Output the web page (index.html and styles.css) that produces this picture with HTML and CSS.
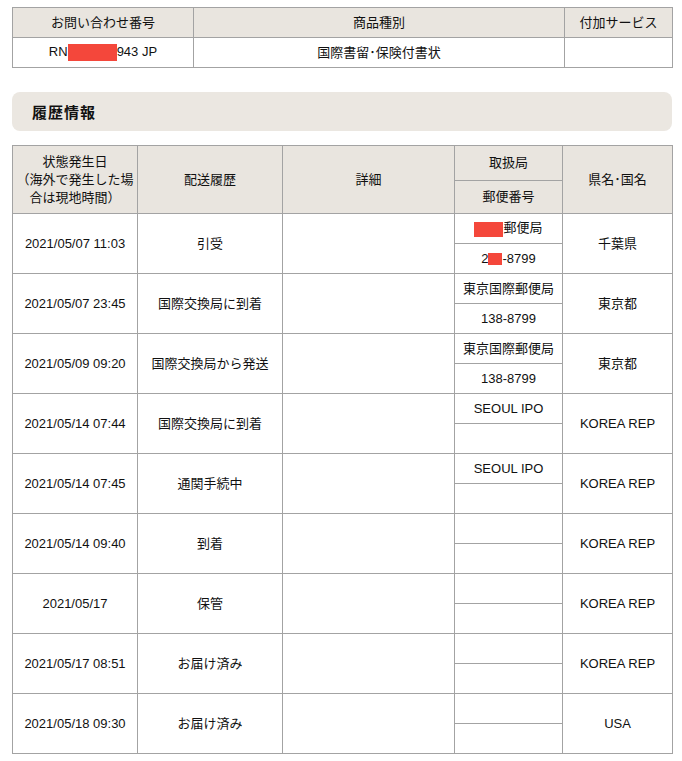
FILE: index.html
```html
<!DOCTYPE html>
<html lang="ja">
<head>
<meta charset="utf-8">
<title>追跡</title>
<link rel="stylesheet" href="styles.css">
</head>
<body>
<div class="page">
  <table class="summary">
    <colgroup><col class="c1"><col class="c2"><col class="c3"></colgroup>
    <tr class="h"><th>お問い合わせ番号</th><th>商品種別</th><th>付加サービス</th></tr>
    <tr class="r"><td>RN<span class="redact w49"></span>943 JP</td><td>国際書留･保険付書状</td><td></td></tr>
  </table>

  <div class="section">履歴情報</div>

  <table class="history">
    <colgroup><col class="d1"><col class="d2"><col class="d3"><col class="d4"><col class="d5"></colgroup>
    <tr class="h1">
      <th rowspan="2" class="multi">状態発生日<br>（海外で発生した場<br>合は現地時間）</th>
      <th rowspan="2">配送履歴</th>
      <th rowspan="2">詳細</th>
      <th>取扱局</th>
      <th rowspan="2">県名･国名</th>
    </tr>
    <tr class="h2"><th>郵便番号</th></tr>

    <tr class="s"><td rowspan="2">2021/05/07 11:03</td><td rowspan="2">引受</td><td rowspan="2"></td><td><span class="redact w29"></span>郵便局</td><td rowspan="2">千葉県</td></tr>
    <tr class="s"><td>2<span class="redact w14"></span>-8799</td></tr>

    <tr class="s"><td rowspan="2">2021/05/07 23:45</td><td rowspan="2">国際交換局に到着</td><td rowspan="2"></td><td>東京国際郵便局</td><td rowspan="2">東京都</td></tr>
    <tr class="s"><td>138-8799</td></tr>

    <tr class="s"><td rowspan="2">2021/05/09 09:20</td><td rowspan="2">国際交換局から発送</td><td rowspan="2"></td><td>東京国際郵便局</td><td rowspan="2">東京都</td></tr>
    <tr class="s"><td>138-8799</td></tr>

    <tr class="s"><td rowspan="2">2021/05/14 07:44</td><td rowspan="2">国際交換局に到着</td><td rowspan="2"></td><td>SEOUL IPO</td><td rowspan="2">KOREA REP</td></tr>
    <tr class="s"><td></td></tr>

    <tr class="s"><td rowspan="2">2021/05/14 07:45</td><td rowspan="2">通関手続中</td><td rowspan="2"></td><td>SEOUL IPO</td><td rowspan="2">KOREA REP</td></tr>
    <tr class="s"><td></td></tr>

    <tr class="s"><td rowspan="2">2021/05/14 09:40</td><td rowspan="2">到着</td><td rowspan="2"></td><td></td><td rowspan="2">KOREA REP</td></tr>
    <tr class="s"><td></td></tr>

    <tr class="s"><td rowspan="2">2021/05/17</td><td rowspan="2">保管</td><td rowspan="2"></td><td></td><td rowspan="2">KOREA REP</td></tr>
    <tr class="s"><td></td></tr>

    <tr class="s"><td rowspan="2">2021/05/17 08:51</td><td rowspan="2">お届け済み</td><td rowspan="2"></td><td></td><td rowspan="2">KOREA REP</td></tr>
    <tr class="s"><td></td></tr>

    <tr class="s"><td rowspan="2">2021/05/18 09:30</td><td rowspan="2">お届け済み</td><td rowspan="2"></td><td></td><td rowspan="2">USA</td></tr>
    <tr class="s"><td></td></tr>
  </table>
</div>
</body>
</html>
```

FILE: styles.css
```css
html, body {
  margin: 0;
  padding: 0;
  background: #fff;
}
body {
  font-family: "Liberation Sans", "Noto Sans CJK JP", sans-serif;
  font-size: 13px;
  color: #111;
}
.page {
  padding: 7px 10px 0 12px;
  width: 660px;
}
table {
  border-collapse: collapse;
  table-layout: fixed;
  width: 660px;
}
th, td {
  border: 1px solid #a3a3a3;
  padding: 0 2px;
  text-align: center;
  vertical-align: middle;
  font-weight: normal;
  line-height: 16px;
  white-space: nowrap;
}
th {
  background: #e9e5df;
}
.summary .c1 { width: 181px; }
.summary .c2 { width: 371px; }
.summary .c3 { width: 108px; }
.summary tr { height: 30px; }

.section {
  margin-top: 24px;
  height: 39px;
  background: #ebe7e1;
  border-radius: 8px;
  display: flex;
  align-items: center;
  padding-left: 20px;
  font-weight: bold;
  font-size: 15px;
  letter-spacing: 1px;
}

.history { margin-top: 14px; }
.history .d1 { width: 125px; }
.history .d2 { width: 145px; }
.history .d3 { width: 172px; }
.history .d4 { width: 108px; }
.history .d5 { width: 110px; }
.history .h1 { height: 35px; }
.history .h2 { height: 33px; }
.history .multi { line-height: 18px; padding: 0; }
.history tr.s { height: 30px; }

.redact {
  display: inline-block;
  background: #f4473b;
  vertical-align: middle;
  height: 17px;
}
.w49 { width: 49px; }
.w29 { width: 29px; height: 15px; }
.w14 { width: 14px; height: 12px; }
```
